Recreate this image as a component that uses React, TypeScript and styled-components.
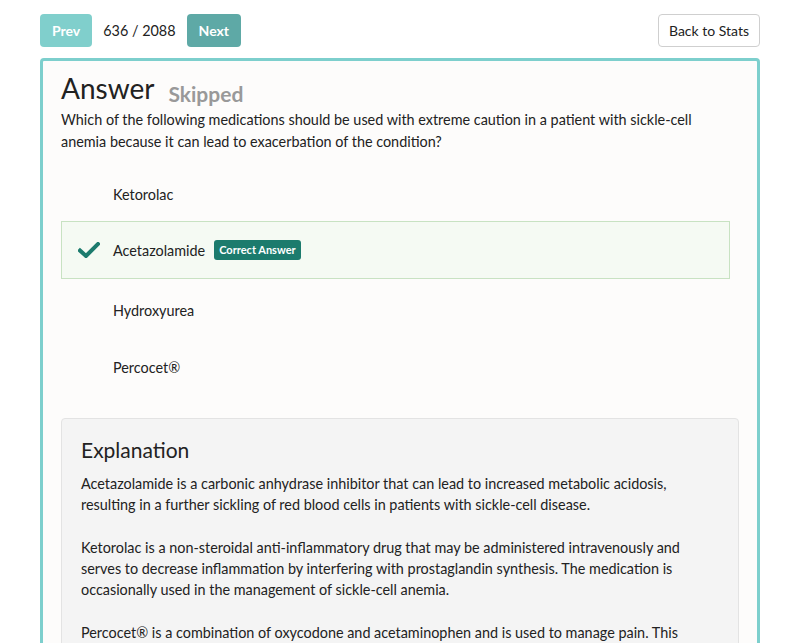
import React from "react";
import styled, { createGlobalStyle } from "styled-components";

const Global = createGlobalStyle`
  html, body { margin: 0; padding: 0; background: #ffffff; }
  body { font-family: Lato, "Open Sans", sans-serif; color: #222; }
  * { box-sizing: border-box; }
`;

const Page = styled.div`
  padding: 14px 40px 0 40px;
  width: 800px;
  height: 643px;
  overflow: hidden;
`;

const Toolbar = styled.div`
  display: flex;
  align-items: center;
  justify-content: space-between;
  height: 33px;
`;

const Nav = styled.div`
  display: flex;
  align-items: center;
  gap: 11px;
`;

const NavButton = styled.button<{ $dark?: boolean }>`
  height: 33px;
  padding: 0 12px;
  border: none;
  border-radius: 4px;
  background: ${(p) => (p.$dark ? "#5ea9a6" : "#80cfcc")};
  color: #fff;
  font-family: Lato, sans-serif;
  font-weight: 700;
  font-size: 14px;
`;

const Counter = styled.span`
  font-size: 14.4px;
  color: #222;
`;

const BackButton = styled.button`
  height: 33px;
  padding: 0 10px;
  border: 1px solid #cfcfcf;
  border-radius: 4px;
  background: #fff;
  color: #222;
  font-family: Lato, sans-serif;
  font-size: 14px;
`;

const Panel = styled.div`
  margin-top: 11px;
  border: 3px solid #7dcfcd;
  border-radius: 4px;
  background: #fdfcfb;
  padding: 10px 18px 0 18px;
  height: 600px;
`;

const TitleRow = styled.div`
  display: flex;
  align-items: flex-end;
  gap: 14px;
`;

const Title = styled.h1`
  margin: 0;
  font-weight: 400;
  font-size: 28px;
  line-height: 34px;
  color: #222;
`;

const Status = styled.span`
  font-weight: 700;
  font-size: 21px;
  color: #999;
  line-height: 24px;
  margin-bottom: -1px;
`;

const Question = styled.p`
  margin: 4px 0 0 0;
  font-size: 14.4px;
  line-height: 22px;
  color: #222;
`;

const Options = styled.div`
  margin-top: 13px;
  width: 669px;
  display: flex;
  flex-direction: column;
`;

const Option = styled.div<{ $correct?: boolean }>`
  height: ${(p) => (p.$correct ? "58px" : "57px")};
  margin: ${(p) => (p.$correct ? "-2px 0 3px 0" : "0")};
  display: flex;
  align-items: center;
  padding-left: 51px;
  position: relative;
  font-size: 14.4px;
  color: #222;
  border: 1px solid ${(p) => (p.$correct ? "#c8e2c2" : "transparent")};
  background: ${(p) => (p.$correct ? "#f5faf3" : "transparent")};
`;

const Check = styled.svg`
  position: absolute;
  left: 16px;
  top: 20px;
  width: 22px;
  height: 16px;
`;

const Badge = styled.span`
  margin-left: 9px;
  background: #1c7b6d;
  color: #fff;
  font-weight: 700;
  font-size: 11px;
  line-height: 20px;
  padding: 0 5px;
  border-radius: 3px;
`;

const Explanation = styled.div`
  margin-top: 22px;
  width: 678px;
  background: #f4f4f4;
  border: 1px solid #e3e3e3;
  border-radius: 4px;
  padding: 18px 19px 20px 19px;
`;

const ExpTitle = styled.h2`
  margin: 0 0 10px 0;
  font-weight: 400;
  font-size: 21px;
  line-height: 26px;
  color: #222;
`;

const Para = styled.p`
  margin: 0 0 22px 0;
  font-size: 14.4px;
  line-height: 21px;
  color: #222;
`;

export default function App() {
  return (
    <>
      <Global />
      <Page>
        <Toolbar>
          <Nav>
            <NavButton>Prev</NavButton>
            <Counter>636 / 2088</Counter>
            <NavButton $dark>Next</NavButton>
          </Nav>
          <BackButton>Back to Stats</BackButton>
        </Toolbar>
        <Panel>
          <TitleRow>
            <Title>Answer</Title>
            <Status>Skipped</Status>
          </TitleRow>
          <Question>
            Which of the following medications should be used with extreme caution in a patient with sickle-cell
            anemia because it can lead to exacerbation of the condition?
          </Question>
          <Options>
            <Option>Ketorolac</Option>
            <Option $correct>
              <Check viewBox="0 0 22 16">
                <path d="M2 8.5 L8 14 L20 2" fill="none" stroke="#1c7b6d" strokeWidth="4" strokeLinecap="square" />
              </Check>
              Acetazolamide
              <Badge>Correct Answer</Badge>
            </Option>
            <Option>Hydroxyurea</Option>
            <Option>Percocet®</Option>
          </Options>
          <Explanation>
            <ExpTitle>Explanation</ExpTitle>
            <Para>
              Acetazolamide is a carbonic anhydrase inhibitor that can lead to increased metabolic acidosis,
              resulting in a further sickling of red blood cells in patients with sickle-cell disease.
            </Para>
            <Para>
              Ketorolac is a non-steroidal anti-inflammatory drug that may be administered intravenously and
              serves to decrease inflammation by interfering with prostaglandin synthesis. The medication is
              occasionally used in the management of sickle-cell anemia.
            </Para>
            <Para>
              Percocet® is a combination of oxycodone and acetaminophen and is used to manage pain. This
              medication is frequently used in the management of sickle-cell crisis.
            </Para>
          </Explanation>
        </Panel>
      </Page>
    </>
  );
}
